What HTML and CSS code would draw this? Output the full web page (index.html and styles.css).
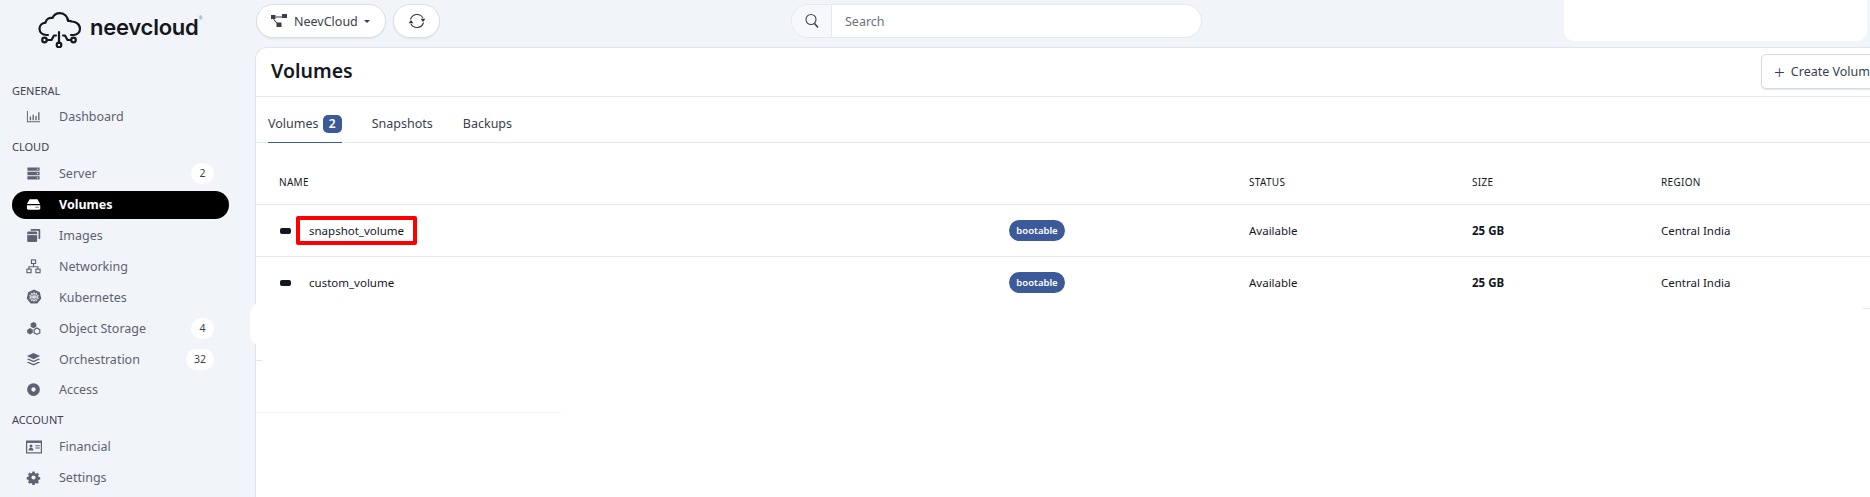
FILE: index.html
```html
<!DOCTYPE html>
<html lang="en">
<head>
<meta charset="UTF-8">
<meta name="viewport" content="width=device-width, initial-scale=1.0">
<title>Volumes - NeevCloud</title>
<link rel="stylesheet" href="styles.css">
</head>
<body>
<div class="app">
  <aside class="sidebar">
    <div class="logo">
      <svg class="logo-mark" viewBox="0 0 44 36" fill="none" stroke="#14171c" stroke-width="2.2" stroke-linecap="round" stroke-linejoin="round">
        <path d="M10 23H8.500C4.500 23 1.500 20.500 1.500 16.800C1.500 13.300 4.200 10.800 7.500 10.600C8.300 6.800 11.500 5.200 14.500 6C16 2.800 19 1.200 22 1.200C26.500 1.200 29.800 4.500 30 9C31 8.700 32.500 8.800 33.500 9.500C37.500 9.300 42 12.300 42 16.800C42 20.500 39 23 35.500 23H33"/>
        <circle cx="6.500" cy="28" r="2.300"/>
        <path d="M8.800 28H13.500L16 23.500H18"/>
        <circle cx="21" cy="33" r="2.300"/>
        <path d="M21 30.700V20"/>
        <circle cx="35.500" cy="28" r="2.300"/>
        <path d="M33.200 28H29.500L27 23.500H25"/>
      </svg>
      <span class="logo-text">neevcloud</span>
      <span class="logo-reg">®</span>
    </div>

    <div class="nav-label">GENERAL</div>
    <a class="nav-item">
      <svg class="nav-icon" viewBox="0 0 16 16" fill="currentColor"><path d="M1 2h1v11h13v1.200H1z"/><path d="M4 8h1.400v4H4zM7 6h1.400v6H7zM10 7.500h1.400V12H10zM13 3.500h1.400V12H13z"/></svg>
      <span>Dashboard</span>
    </a>

    <div class="nav-label">CLOUD</div>
    <a class="nav-item">
      <svg class="nav-icon" viewBox="0 0 16 16" fill="currentColor"><path d="M1.500 1.500h13v3.600h-13zM1.500 6.200h13v3.600h-13zM1.500 10.900h13v3.600h-13z"/><path fill="#f1f4f9" d="M11.500 2.800h1.500v1h-1.500zM11.500 7.500h1.500v1h-1.500zM11.500 12.200h1.500v1h-1.500z"/></svg>
      <span>Server</span>
      <span class="nav-count">2</span>
    </a>
    <a class="nav-item active">
      <svg class="nav-icon" viewBox="0 0 16 16" fill="currentColor"><path d="M3.800 2.500h8.400L15 7.500H1z"/><path d="M1 8.700h14.200v3.300a1.500 1.500 0 0 1-1.500 1.500H2.500A1.500 1.500 0 0 1 1 12z"/><path fill="#000" d="M10.300 10.500h1v1h-1zM12.300 10.500h1v1h-1z"/></svg>
      <span>Volumes</span>
    </a>
    <a class="nav-item">
      <svg class="nav-icon" viewBox="0 0 16 16" fill="currentColor"><path d="M5 1h9a1.200 1.200 0 0 1 1.200 1.200v8.500a1 1 0 0 1-1 1h-.8V3.600a.8.800 0 0 0-.8-.8H5z"/><path d="M2.500 3.800h8.200a1.200 1.200 0 0 1 1.200 1.200v8.800a1.200 1.200 0 0 1-1.200 1.200H2.500a1.200 1.200 0 0 1-1.200-1.200V5a1.200 1.200 0 0 1 1.200-1.200z"/><path fill="#f1f4f9" d="M1.300 6.600h10.600v1H1.300z"/></svg>
      <span>Images</span>
    </a>
    <a class="nav-item">
      <svg class="nav-icon" viewBox="0 0 16 16" fill="none" stroke="currentColor" stroke-width="1.200"><rect x="5.800" y="1" width="4.400" height="3.800"/><rect x="1" y="10.800" width="4.400" height="3.800"/><rect x="10.600" y="10.800" width="4.400" height="3.800"/><path d="M8 4.800v3.400M3.200 10.800V8.200h9.600v2.600"/></svg>
      <span>Networking</span>
    </a>
    <a class="nav-item">
      <svg class="nav-icon nav-icon-lg" viewBox="0 0 16 16"><path fill="currentColor" d="M8 .5l5.800 2.800 1.500 6.200-4 5.100H4.700l-4-5.100 1.500-6.200z"/><g fill="none" stroke="#e6e9f0" stroke-width=".8"><circle cx="8" cy="8" r="3.700"/><path d="M8 2.800v10.400M3 6.600l10 2.800M3 9.400l10-2.800M5 3.800l6 8.400M11 3.800l-6 8.400"/></g></svg>
      <span>Kubernetes</span>
    </a>
    <a class="nav-item">
      <svg class="nav-icon" viewBox="0 0 16 16" fill="currentColor"><path d="M8 1l3 1.700v3.400L8 7.800 5 6.100V2.700z"/><path d="M4.300 7.500l3 1.700v3.400l-3 1.700-3-1.700V9.200z"/><path d="M11.700 7.500l3 1.700v3.400l-3 1.700-3-1.700V9.200z" fill="none" stroke="currentColor" stroke-width="1.300"/></svg>
      <span>Object Storage</span>
      <span class="nav-count">4</span>
    </a>
    <a class="nav-item">
      <svg class="nav-icon" viewBox="0 0 16 16" fill="currentColor"><path d="M8 1l7 3.300-7 3.300-7-3.300z"/><path d="M2.600 6.900L8 9.400l5.400-2.500L15 7.700l-7 3.300-7-3.300z"/><path d="M2.600 10.300L8 12.800l5.400-2.500 1.600.8L8 14.500l-7-3.400z"/></svg>
      <span>Orchestration</span>
      <span class="nav-count">32</span>
    </a>
    <a class="nav-item">
      <svg class="nav-icon" viewBox="0 0 16 16"><circle cx="8" cy="8" r="6.800" fill="currentColor"/><circle cx="8" cy="8" r="2.300" fill="#f1f4f9"/></svg>
      <span>Access</span>
    </a>

    <div class="nav-label">ACCOUNT</div>
    <a class="nav-item">
      <svg class="nav-icon nav-icon-lg" viewBox="0 0 16 13"><rect x=".6" y=".6" width="14.800" height="11.800" fill="none" stroke="currentColor" stroke-width="1.200"/><path fill="currentColor" d="M.6.600h14.800v1.800H.6z"/><circle cx="5" cy="5.500" r="1.500" fill="currentColor"/><path fill="currentColor" d="M2.500 10c0-1.800 1-2.700 2.500-2.700s2.500.9 2.500 2.700zM9.300 4.800h4.500v1H9.300zM9.300 7h4.500v1H9.300z"/></svg>
      <span>Financial</span>
    </a>
    <a class="nav-item">
      <svg class="nav-icon" viewBox="0 0 16 16"><path fill="currentColor" d="M6.700 1h2.600l.4 1.900 1.300.6 1.700-1 1.800 1.800-1 1.700.6 1.300 1.900.4v2.600l-1.900.4-.6 1.300 1 1.700-1.800 1.800-1.700-1-1.300.6-.4 1.900H6.700l-.4-1.900-1.300-.6-1.700 1-1.800-1.800 1-1.700-.6-1.300-1.900-.4V7.400l1.900-.4.600-1.300-1-1.700 1.800-1.800 1.700 1 1.300-.6z" transform="translate(.8 .8) scale(.9)"/><circle cx="8" cy="8" r="2.200" fill="#f1f4f9"/></svg>
      <span>Settings</span>
    </a>
  </aside>

  <div class="content">
    <header class="topbar">
      <button class="pill tenant">
        <svg class="tenant-icon" viewBox="0 0 16 14" fill="#3a3f4b"><rect x="0" y="1" width="4.500" height="4"/><rect x="11" y="0" width="5" height="4"/><rect x="5.500" y="8.500" width="5" height="4.500"/><path d="M4.500 2.400h6.500v1H4.500zM3 5l3.400 4-.8.600L2.200 5.600z"/></svg>
        <span>NeevCloud</span>
        <span class="caret"></span>
      </button>
      <button class="pill refresh">
        <svg viewBox="0 0 20 20" width="20" height="20" fill="none" stroke="#30353f" stroke-width="1.100"><path d="M3.500 8.500A6.800 6.800 0 0 1 16 7"/><path d="M16.500 11.500A6.800 6.800 0 0 1 4 13"/><path d="M13.600 7.800h4.800L16 11zM1.600 12.200h4.800L4 9z" fill="#30353f" stroke="none"/></svg>
      </button>
      <div class="search">
        <span class="search-icon">
          <svg viewBox="0 0 16 16" width="16" height="16" fill="none" stroke="#3f4450" stroke-width="1.100"><circle cx="7" cy="6.500" r="5"/><path d="M10.500 10.500l3.500 4" stroke-width="1.600"/></svg>
        </span>
        <span class="search-text">Search</span>
      </div>
    </header>

    <main class="panel">
      <div class="panel-head">
        <h1>Volumes</h1>
        <button class="create-btn"><span class="plus">+</span><span>Create Volume</span></button>
      </div>
      <div class="tabs">
        <a class="tab current">Volumes <span class="tab-count">2</span></a>
        <a class="tab">Snapshots</a>
        <a class="tab">Backups</a>
      </div>
      <div class="vol-table">
        <div class="vol-row vol-head">
          <span class="col-name">NAME</span>
          <span></span>
          <span>STATUS</span>
          <span>SIZE</span>
          <span>REGION</span>
        </div>
        <div class="vol-row">
          <span class="col-name"><i class="disk"></i><span class="vol-name marked">snapshot_volume</span></span>
          <span><span class="tag">bootable</span></span>
          <span>Available</span>
          <b>25 GB</b>
          <span>Central India</span>
        </div>
        <div class="vol-row">
          <span class="col-name"><i class="disk"></i><span class="vol-name">custom_volume</span></span>
          <span><span class="tag">bootable</span></span>
          <span>Available</span>
          <b>25 GB</b>
          <span>Central India</span>
        </div>
        <div class="vol-row"></div>
        <div class="vol-row faint"></div>
      </div>
    </main>
  </div>

  <!-- blanked out parts of the capture -->
  <div class="blank blank-top"></div>
  <div class="blank blank-edge"></div>
  <div class="blank blank-row2"></div>
  <div class="blank blank-row3"></div>
  <div class="blank blank-row4"></div>
</div>
</body>
</html>
```

FILE: styles.css
```css
* {
    box-sizing: border-box;
}

html, body {
    margin: 0;
    height: 100%;
    overflow: hidden;
}

body {
    background-color: #f1f4f9;
    color: #14171f;
    font-family: "Noto Sans", "Open Sans", sans-serif;
    font-size: 12.500px;
}

button {
    font-family: inherit;
    cursor: pointer;
}

.app {
    position: relative;
    display: flex;
    width: 1870px;
    height: 497px;
    overflow: hidden;
}

/* sidebar */
.sidebar {
    display: flex;
    flex-direction: column;
    flex: 0 0 255px;
    padding: 0 26px 0 12px;
}

.logo {
    display: flex;
    flex: none;
    align-items: flex-start;
    height: 75.500px;
    padding: 12px 0 0 26px;
}

.logo-mark {
    width: 44px;
    height: 36px;
}

.logo-text {
    margin: 1px 0 0 8px;
    font-family: Inter, "Liberation Sans", sans-serif;
    font-size: 22px;
    font-weight: 600;
    line-height: 28px;
    letter-spacing: -0.250px;
    color: #14171c;
}

.logo-reg {
    font-size: 5px;
    color: #8a8f98;
    margin-top: 3px;
}

.nav-label {
    flex: none;
    height: 26px;
    padding-top: 8px;
    font-size: 11px;
    line-height: 14px;
    color: #3d4252;
}

.nav-item {
    display: flex;
    flex: none;
    align-items: center;
    height: 28px;
    margin: 1.450px 0;
    padding: 0 15px 0 14px;
    border-radius: 14px;
    font-size: 12.500px;
    color: #5c6272;
}

.nav-item.active {
    background-color: #000;
    color: #fff;
    font-weight: 700;
}

.nav-icon {
    flex: none;
    width: 15px;
    height: 15px;
    margin-right: 18px;
}

.nav-icon-lg {
    width: 16px;
    height: 16px;
    margin-right: 17px;
}

.nav-count {
    margin-left: auto;
    min-width: 23px;
    height: 21px;
    padding: 0 8px;
    border-radius: 11px;
    background-color: #fff;
    color: #3a3f4b;
    font-size: 10.500px;
    line-height: 21px;
    text-align: center;
}

/* top bar */
.content {
    flex: 1;
    min-width: 0;
}

.topbar {
    display: flex;
    align-items: flex-start;
    height: 47px;
    padding: 4px 0 0 1px;
}

.pill {
    display: flex;
    align-items: center;
    height: 34px;
    background-color: #fff;
    border: 1px solid #d9dfe9;
    border-radius: 17px;
    box-shadow: 0 1px 1px #dfe4ed;
    color: #3a3f4b;
    font-size: 12.500px;
}

.tenant {
    width: 130px;
    padding: 0 0 0 13px;
}

.tenant-icon {
    width: 18px;
    height: 14px;
    margin-right: 6px;
}

.caret {
    margin-left: 6px;
    border-left: 3.500px solid transparent;
    border-right: 3.500px solid transparent;
    border-top: 3.500px solid #3a3f4b;
}

.refresh {
    justify-content: center;
    width: 47px;
    margin-left: 7px;
    padding: 0;
}

.search {
    display: flex;
    width: 411px;
    height: 34px;
    margin-left: 351px;
    background-color: #fff;
    border: 1px solid #e4e8f0;
    border-radius: 17px;
    overflow: hidden;
}

.search-icon {
    display: flex;
    align-items: center;
    justify-content: center;
    width: 40px;
    background-color: #f7f8fb;
    border-right: 1px solid #e4e8f0;
}

.search-text {
    padding-left: 13px;
    line-height: 34px;
    color: #6b7080;
}

/* main panel */
.panel {
    height: 450px;
    background-color: #fff;
    border-left: 1px solid #dfe4ee;
    border-top: 1px solid #dfe4ee;
    border-top-left-radius: 12px;
}

.panel-head {
    display: flex;
    align-items: flex-start;
    justify-content: space-between;
    height: 49px;
    padding: 6px 0 0 15px;
    border-bottom: 1px solid #e3e8f0;
}

h1 {
    margin: 1px 0 0;
    font-size: 19.500px;
    font-weight: 600;
    line-height: 32px;
}

.create-btn {
    display: flex;
    flex: none;
    align-items: center;
    width: 140px;
    height: 35px;
    margin-right: -31px;
    padding: 0 0 0 12px;
    background-color: #fff;
    border: 1px solid #d5dbe6;
    border-radius: 5px;
    box-shadow: 0 1px 1px #e2e6ee;
    color: #3a3f4b;
    font-size: 12.500px;
}

.plus {
    margin-right: 6px;
    font-size: 19px;
    font-weight: 300;
    line-height: 20px;
}

.tabs {
    display: flex;
    gap: 30px;
    height: 46px;
    padding-left: 12px;
    border-bottom: 1px solid #e3e8f0;
}

.tab {
    height: 46px;
    padding-top: 17px;
    color: #3a3f4b;
    line-height: 20px;
}

.tab.current {
    border-bottom: 1px solid #3c5a99;
}

.tab-count {
    display: inline-block;
    width: 19px;
    height: 18px;
    margin-left: 1px;
    background-color: #3c5a99;
    border-radius: 5px;
    color: #fff;
    font-size: 12px;
    font-weight: 600;
    line-height: 18px;
    text-align: center;
}

/* volumes table */
.vol-row {
    display: grid;
    grid-template-columns: 730px 240px 223px 189px 1fr;
    align-items: center;
    height: 52px;
    padding-left: 23px;
    border-bottom: 1px solid #e3e8f0;
    font-size: 11.500px;
}

.vol-head {
    height: 62px;
    padding-top: 17px;
    font-size: 10px;
    letter-spacing: 0.300px;
}

.vol-row b {
    font-weight: 700;
}

.vol-row.faint {
    border-bottom-color: #f1f3f7;
}

.col-name {
    display: flex;
    align-items: center;
}

.disk {
    flex: none;
    width: 11px;
    height: 6px;
    margin-left: 1px;
    background-color: #14171f;
    border-radius: 2px;
}

.vol-name {
    margin-left: 18px;
}

.marked {
    height: 29px;
    margin-left: 5px;
    padding: 0 9px 0 9px;
    border: 4px solid #f00;
    border-radius: 2px;
    line-height: 21px;
}

.tag {
    display: inline-block;
    width: 56px;
    height: 21px;
    background-color: #3c5a99;
    border-radius: 11px;
    color: #fff;
    font-size: 9.500px;
    font-weight: 600;
    line-height: 21px;
    text-align: center;
}

/* white boxes over the capture */
.blank {
    position: absolute;
    background-color: #fff;
}

.blank-top {
    left: 1564px;
    top: 0;
    width: 303px;
    height: 41px;
    border-radius: 0 0 10px 10px;
}

.blank-edge {
    left: 250px;
    top: 303px;
    width: 60px;
    height: 42px;
    border-radius: 10px 0 0 10px;
}

.blank-row2 {
    left: 256px;
    top: 300px;
    width: 1607px;
    height: 20px;
}

.blank-row3 {
    left: 262px;
    top: 350px;
    width: 1608px;
    height: 20px;
}

.blank-row4 {
    left: 561px;
    top: 405px;
    width: 1309px;
    height: 15px;
}
```
